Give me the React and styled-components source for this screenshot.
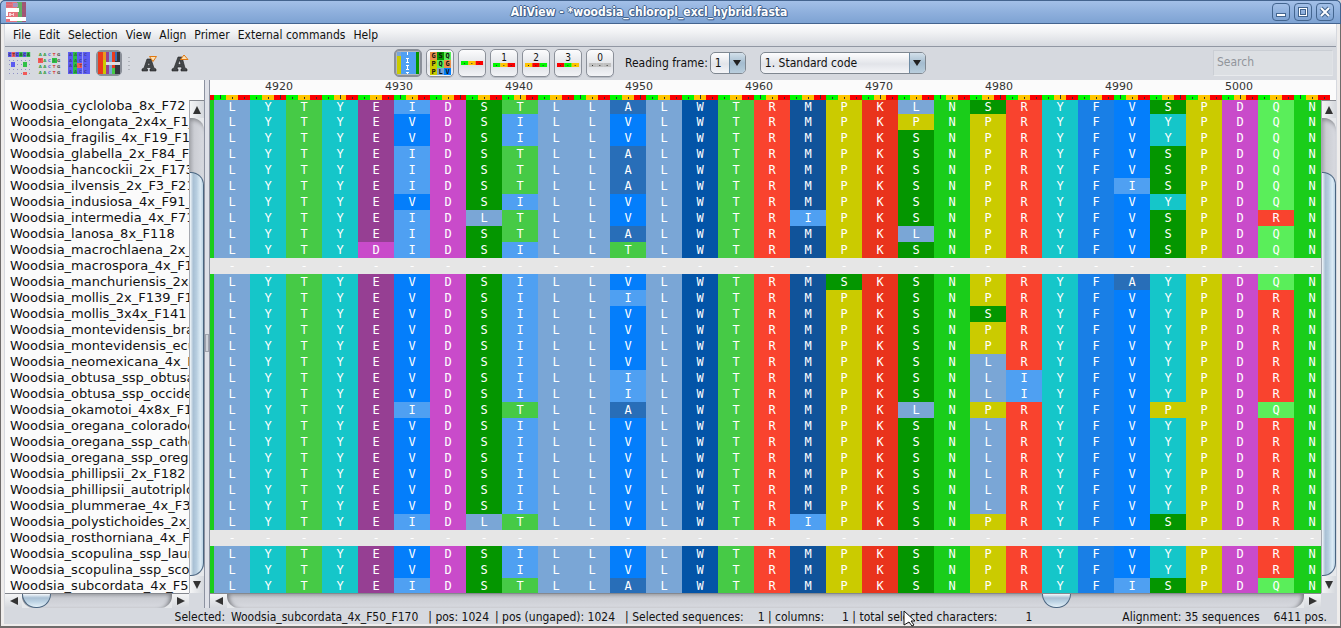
import React from "react";
import styled, { createGlobalStyle, css } from "styled-components";

const ui = `"DejaVu Sans Condensed", "DejaVu Sans", sans-serif`;

const Global = createGlobalStyle`
  * { box-sizing: border-box; }
  body { margin: 0; background: #d6d9df; }
  button, select, input { font: inherit; color: inherit; padding: 0; margin: 0; }
  svg { overflow: visible; }
`;

const SEQUENCES = [
  ["Woodsia_cycloloba_8x_F72", "LYTYEIDSTLLALWTRMPKLNSRYFVSPDQN"],
  ["Woodsia_elongata_2x4x_F1_F2", "LYTYEVDSILLVLWTRMPKPNPRYFVYPDQN"],
  ["Woodsia_fragilis_4x_F19_F18", "LYTYEVDSILLVLWTRMPKSNPRYFVYPDQN"],
  ["Woodsia_glabella_2x_F84_F12", "LYTYEIDSTLLALWTRMPKSNPRYFVSPDQN"],
  ["Woodsia_hancockii_2x_F173", "LYTYEIDSTLLALWTRMPKSNPRYFVSPDQN"],
  ["Woodsia_ilvensis_2x_F3_F21", "LYTYEIDSTLLALWTRMPKSNPRYFISPDQN"],
  ["Woodsia_indusiosa_4x_F91_F2", "LYTYEVDSILLVLWTRMPKSNPRYFVYPDQN"],
  ["Woodsia_intermedia_4x_F71", "LYTYEIDLTLLVLWTRIPKSNPRYFVSPDRN"],
  ["Woodsia_lanosa_8x_F118", "LYTYEIDSTLLALWTRMPKLNPRYFVSPDQN"],
  ["Woodsia_macrochlaena_2x_F8", "LYTYDIDSILLTLWTRMPKSNPRYFVSPDQN"],
  ["Woodsia_macrospora_4x_F12", "-------------------------------"],
  ["Woodsia_manchuriensis_2x4x", "LYTYEVDSILLVLWTRMSKSNPRYFAYPDQN"],
  ["Woodsia_mollis_2x_F139_F14", "LYTYEVDSILLILWTRMPKSNPRYFVYPDRN"],
  ["Woodsia_mollis_3x4x_F141", "LYTYEVDSILLVLWTRMPKSNSRYFVYPDRN"],
  ["Woodsia_montevidensis_brasil", "LYTYEVDSILLVLWTRMPKSNPRYFVYPDRN"],
  ["Woodsia_montevidensis_ecuador", "LYTYEVDSILLVLWTRMPKSNPRYFVYPDRN"],
  ["Woodsia_neomexicana_4x_F7", "LYTYEVDSILLVLWTRMPKSNLRYFVYPDRN"],
  ["Woodsia_obtusa_ssp_obtusa", "LYTYEVDSILLILWTRMPKSNLIYFVYPDRN"],
  ["Woodsia_obtusa_ssp_occidentalis", "LYTYEVDSILLILWTRMPKSNLIYFVYPDRN"],
  ["Woodsia_okamotoi_4x8x_F16", "LYTYEIDSTLLALWTRMPKLNPRYFVPPDQN"],
  ["Woodsia_oregana_coloradoensis", "LYTYEVDSILLVLWTRMPKSNLRYFVYPDRN"],
  ["Woodsia_oregana_ssp_cathcartiana", "LYTYEVDSILLVLWTRMPKSNLRYFVYPDRN"],
  ["Woodsia_oregana_ssp_oregana", "LYTYEVDSILLVLWTRMPKSNLRYFVYPDRN"],
  ["Woodsia_phillipsii_2x_F182", "LYTYEVDSILLVLWTRMPKSNLRYFVYPDRN"],
  ["Woodsia_phillipsii_autotriploid", "LYTYEVDSILLVLWTRMPKSNLRYFVYPDRN"],
  ["Woodsia_plummerae_4x_F31", "LYTYEVDSILLVLWTRMPKSNLRYFVYPDRN"],
  ["Woodsia_polystichoides_2x_F5", "LYTYEIDLTLLVLWTRIPKSNPRYFVSPDRN"],
  ["Woodsia_rosthorniana_4x_F59", "-------------------------------"],
  ["Woodsia_scopulina_ssp_laurentiana", "LYTYEVDSILLVLWTRMPKSNPRYFVYPDRN"],
  ["Woodsia_scopulina_ssp_scopulina", "LYTYEVDSILLVLWTRMPKSNPRYFVYPDRN"],
  ["Woodsia_subcordata_4x_F50_F170", "LYTYEIDSTLLALWTRMPKSNPRYFISPDQN"],
];

const RESIDUE = {
  L: "#7aa6d6", Y: "#15c6c9", T: "#46ca46", E: "#963f93", I: "#4fa0f2",
  V: "#047efb", D: "#c94bca", S: "#049600", A: "#286eb8", W: "#0354a7",
  R: "#f9432e", M: "#10539a", P: "#cbcb00", K: "#e9331c", N: "#1acd1a",
  F: "#197fe6", Q: "#5aee5a", "-": "#e6e6e6",
};

const CODON = ["#00f800", "#ffc400", "#fa0000"];

/* ---------- window frame ---------- */

const Window = styled.div`
  display: flex;
  flex-direction: column;
  height: 100vh;
  overflow: hidden;
  font: 12px/16px ${ui};
  color: #111;
  background: #3b5f8f;
  border-radius: 5px 5px 0 0;
`;

const TitleBar = styled.header`
  display: grid;
  grid-template-columns: auto 1fr auto;
  align-items: center;
  height: 24px;
  flex: none;
  padding: 0 6px 0 5px;
  border: 1px solid #44648f;
  border-radius: 5px 5px 0 0;
  background: linear-gradient(#a3c0e8, #8fb0dd 50%, #7ea3d3);
`;

const Title = styled.h1`
  margin: 0;
  font-size: 12px;
  line-height: 22px;
  font-weight: bold;
  text-align: center;
  white-space: nowrap;
  color: #fff;
  text-shadow: 1px 0 #44658f, -1px 0 #44658f, 0 1px #44658f, 0 -1px #44658f, 1px 1px #44658f;
`;

const WindowButtons = styled.div`
  display: flex;
  justify-content: flex-end;
  gap: 4px;
`;

const WindowButton = styled.button`
  display: grid;
  place-items: center;
  width: 18px;
  height: 18px;
  border: 1px solid #43658f;
  border-radius: 4px;
  background: linear-gradient(#a3c0e8, #7ea3d3);
`;

const Frame = styled.div`
  display: flex;
  flex-direction: column;
  flex: 1;
  min-height: 0;
  border: solid #6f6c6b;
  border-width: 0 1px 2px 1px;
  background: #d6d9df;
  box-shadow: inset 3px 0 #efedec, inset -3px 0 #efedec, inset 0 -2px #efedec;
  padding: 0 4px 3px 4px;
`;

const MenuBar = styled.nav`
  display: flex;
  gap: 8px;
  flex: none;
  height: 23px;
  padding: 2px 8px;
  border-bottom: 1px solid #9197a3;
  background: linear-gradient(#fdfdfe, #f2f3f5 35%, #d6d9df);
`;

const MenuItem = styled.button`
  border: 0;
  background: none;
  height: 18px;
  line-height: 18px;
  white-space: nowrap;
`;

/* ---------- toolbar ---------- */

const ToolBar = styled.div`
  display: flex;
  align-items: center;
  flex: none;
  height: 33px;
  padding: 0 3px 1px;
`;

const ToolGroup = styled.div`
  display: flex;
  align-items: center;
  gap: ${(p) => p.$gap}px;
  margin-right: ${(p) => p.$after}px;
`;

const Grow = styled.div`
  flex: ${(p) => p.$share ?? 1};
`;

const FlatTool = styled.button`
  display: grid;
  place-items: center;
  border: 0;
  background: none;
`;

const ToggleTool = styled.button`
  display: grid;
  place-items: center;
  align-content: center;
  width: ${(p) => p.$size}px;
  height: ${(p) => p.$size}px;
  border: 1px solid #8b9099;
  border-radius: 5px;
  background: ${(p) =>
    p.$pressed ? "#b4b8bf" : "linear-gradient(#fcfcfd, #e4e6ea 50%, #dfe1e6 60%, #f3f4f7)"};
  box-shadow: ${(p) => (p.$pressed ? "inset 0 0 0 1px #8a8f98" : "0 1px #b9bdc5")};
`;

const Combo = styled.span`
  display: flex;
  width: ${(p) => p.$width}px;
  height: 22px;
  margin-left: ${(p) => p.$before}px;
  border: 1px solid #7f8790;
  border-radius: 5px;
  overflow: hidden;
  background: linear-gradient(#fdfdfe, #e2e4e9 55%, #f4f5f8);
`;

const ComboSelect = styled.select`
  appearance: none;
  flex: 1;
  min-width: 0;
  border: 0;
  padding-left: 4px;
  background: none;
`;

const ComboArrow = styled.span`
  display: grid;
  place-items: center;
  width: 16px;
  pointer-events: none;
  border-left: 1px solid #6d8aa3;
  background: linear-gradient(#d3e0ea, #a4bccf 50%, #b9cedd);
`;

const SearchField = styled.input`
  width: 120px;
  height: 26px;
  padding: 0 3px 2px;
  border: 1px solid #caced4;
  border-right-color: #e0e2e6;
  border-bottom-color: #e8eaed;
  background: #dcdfe3;
  &::placeholder { color: #91959b; opacity: 1; }
`;

const HiddenLabel = styled.label`
  position: absolute;
  width: 1px;
  height: 1px;
  overflow: hidden;
  clip-path: inset(50%);
`;

/* ---------- split view ---------- */

const SplitView = styled.main`
  display: flex;
  flex: 1;
  min-height: 0;
`;

const Pane = styled.section`
  display: grid;
  grid-template-columns: minmax(0, 1fr) 15px;
  grid-template-rows: 20px minmax(0, 1fr) 15px;
  flex: ${(p) => p.$flex};
  min-width: 0;
  background: #d6d9df;
`;

const PaneHeader = styled.div`
  grid-column: 1 / -1;
  overflow: hidden;
  background: #fbfbfb;
`;

const Divider = styled.div`
  flex: none;
  width: 6px;
  display: grid;
  align-items: center;
  border-left: 1px solid #8c92a0;
  border-right: 1px solid #8c92a0;
  background: #dfe1e8;
`;

const Grip = styled.span`
  height: 18px;
  margin-bottom: 2px;
  border: 1px solid #a0a4ae;
  background: #cfd2da;
`;

const NameList = styled.ul`
  margin: 0;
  padding: 0 0 0 5px;
  list-style: none;
  overflow: hidden;
  background: #fbfbfb;
  font: 13px/16px "DejaVu Sans", sans-serif;
`;

const Name = styled.li`
  height: 16px;
  white-space: nowrap;
  &:first-child { height: 14px; line-height: 12px; }
`;

const RulerLabels = styled.div`
  display: flex;
  height: 15px;
  padding-left: 9px;
  font: 11px/13px "DejaVu Sans", sans-serif;
  color: #333;
`;

const RulerLabel = styled.span`
  flex: 0 0 120px;
  text-align: center;
`;

const RulerStrip = styled.div`
  display: flex;
  height: 5px;
`;

const RulerBase = styled.span`
  flex: 0 0 12px;
  display: flex;
  justify-content: center;
  align-items: ${(p) => (p.$major ? "flex-start" : "center")};
  background: ${(p) => p.$color};
  &::before {
    content: "";
    width: 1px;
    height: ${(p) => (p.$major ? 4 : 2)}px;
    background: #333;
  }
  &:first-child { flex-basis: 4px; }
  &:first-child::before { display: none; }
`;

const Cells = styled.div`
  overflow: hidden;
  background: #fff;
`;

const Alignment = styled.table`
  table-layout: fixed;
  width: 1120px;
  border-collapse: collapse;
  font: 12px/16px "DejaVu Sans Mono", monospace;
  color: #fff;
`;

const Site = styled.tr`
  height: 16px;
  &:first-child { height: 14px; line-height: 12px; }
`;

const Residue = styled.td`
  width: 36px;
  padding: 0;
  text-align: center;
  background: ${(p) => RESIDUE[p.$residue]};
  &:first-child { width: 4px; }
`;

/* ---------- scroll bars ---------- */

const vertical = css`
  flex-direction: column;
  border-left: 1px solid #a6a9b0;
`;

const ScrollBar = styled.div`
  display: flex;
  background: #e6e8eb;
  border-top: 1px solid #85888f;
  ${(p) => p.$vertical && vertical}
`;

const ScrollButton = styled.button`
  display: grid;
  place-items: center;
  flex: 0 0 17px;
  border: 0;
  background: linear-gradient(${(p) => (p.$vertical ? "90deg" : "180deg")}, #f4f5f6, #d5d8dd);
`;

const ScrollTrack = styled.div`
  display: flex;
  flex: 1;
  flex-direction: ${(p) => (p.$vertical ? "column" : "row")};
  border-radius: ${(p) => (p.$vertical ? "0 12px 12px 0" : "0 0 12px 12px")};
  background: linear-gradient(${(p) => (p.$vertical ? "90deg" : "180deg")}, #a9abb1, #cbcdd3 30%, #d8dae0);
  box-shadow: ${(p) => (p.$vertical ? "inset 0 5px 4px -3px #85878c" : "inset 5px 0 4px -3px #77797e, inset -5px 0 4px -3px #77797e")};
`;

const Thumb = styled.div`
  border: 1px solid #4a6580;
  ${(p) =>
    p.$vertical
      ? css`
          flex: ${p.$size};
          border-left: 0;
          border-radius: 0 13px 13px 0;
          background: linear-gradient(90deg, #f3f8fb, #a9c0d4 25%, #b7cee0 50%, #dcebf5 80%, #bcd3e4);
        `
      : css`
          flex: 0 0 29px;
          border-top: 0;
          border-radius: 0 0 14px 14px;
          background: linear-gradient(#f5f9fc, #a9c0d4 30%, #bdd3e4 60%, #e4f1f9);
        `}
`;

/* ---------- status bar ---------- */

const StatusBar = styled.footer`
  position: relative;
  display: flex;
  justify-content: flex-end;
  flex: none;
  height: 15px;
  margin: 0 9px 0 0;
  line-height: 18px;
  white-space: pre;
`;

const StatusItem = styled.span`
  margin-left: ${(p) => p.$before ?? 0}px;
`;

const Pointer = styled.svg`
  position: absolute;
  right: 411px;
  top: 2px;
`;

/* ---------- drawings ---------- */

const Triangle = ({ dir }) => {
  const d = {
    up: "M4 0L8 8H0Z",
    down: "M0 0H8L4 8Z",
    left: "M0 4L8 0V8Z",
    right: "M0 0L8 4L0 8Z",
  }[dir];
  return (
    <svg width="8" height="8" viewBox="0 0 8 8"><path d={d} fill="#333" /></svg>
  );
};

const LogoIcon = () => (
  <svg width="20" height="20" viewBox="0 0 20 20">
    <rect width="20" height="20" fill="#e8737d" />
    <rect x="11" width="5" height="20" fill="#63b066" />
    <rect x="16" width="4" height="20" fill="#9c5878" />
    <rect x="7" y="1" width="5" height="4" fill="#a793bf" />
    <path d="M0 6H13V10H2V14H0Z" fill="#fff" />
    <path d="M2 10H12V15H2Z" fill="#e3707a" />
    <path d="M3 11h2v1h2v-1h1v3h-1v-1h-2v1h-2z" fill="#f7cfd4" />
    <path d="M0 15H20V19H4V17H0Z" fill="#fff" />
    <path d="M0 1h6M0 4h6M16 3h4M16 9h4M16 13h4" stroke="#b9546a" opacity=".6" />
  </svg>
);

const letters = (rows, step, colors) =>
  rows.map((row, r) =>
    [...row].map((ch, c) => (
      <text key={`${r}-${c}`} x={c * step.x + step.x / 2} y={r * step.y + 4} textAnchor="middle"
        fontSize="4" fontFamily="DejaVu Sans, sans-serif" fontWeight="bold" fill={colors(ch, r, c)}>{ch}</text>
    ))
  );

const baseColor = (ch) => ({ A: "#2f9a3a", C: "#5a5ae0", T: "#d84040", G: "#444" }[ch]);

const DiffIcon = () => (
  <svg width="22" height="22" viewBox="0 0 22 22">
    {["#5a5af0", "#f05a5a", "#5a5af0", "#2fc048", "#5a5af0", "#2fc048"].map((f, i) => (
      <rect key={i} x={i * 3.7} width="3.700" height="5" fill={f} />
    ))}
    {letters(["CTCACA"], { x: 3.7, y: 6 }, () => "#222a")}
    {[8, 12, 17, 21].map((y) => (
      <path key={y} d={`M1 ${y}.5H22`} stroke="#8f90c8" strokeDasharray="1 3" />
    ))}
    <rect x="3" y="10" width="4" height="5" fill="#5a5af0" />
    <rect x="15" y="10" width="4" height="5" fill="#2fc048" />
    <rect x="15" y="20" width="4" height="3" fill="#f05a5a" />
  </svg>
);

const PlainIcon = () => (
  <svg width="22" height="22" viewBox="0 0 22 22">
    <rect y="6" width="5" height="5" fill="#f05a5a" />
    <rect x="14" y="6" width="5" height="5" fill="#2fc048" />
    {letters(["AACTG", "TACAG", "AACTG", "AACTG"], { x: 4.6, y: 6 }, baseColor)}
  </svg>
);

const ColumnIcon = () => (
  <svg width="22" height="22" viewBox="0 0 22 22">
    <rect width="22" height="22" fill="#5c5cf2" />
    <rect x="5" width="4" height="22" fill="#2fc048" />
    <rect x="9" y="11" width="5" height="5" fill="#f05a5a" />
    <path d="M14.500 0V22" stroke="#9a9cf0" />
    {letters(["AACC", "AACC", "AATC", "AACC"], { x: 5, y: 5.700 }, () => "#2228")}
  </svg>
);

const AminoIcon = () => (
  <svg width="22" height="22" viewBox="0 0 22 22">
    <rect width="22" height="22" fill="#ea3b1e" />
    <rect x="5" width="3" height="22" fill="#cbcb00" />
    <rect x="5" width="3" height="8" fill="#ea9a1e" />
    <rect x="8" width="3" height="22" fill="#963f93" />
    <rect x="11" width="3" height="22" fill="#7aa6d6" />
    <rect x="14" y="16" width="3" height="6" fill="#46ca46" />
    <rect x="17" width="5" height="22" fill="#33363f" />
    <rect x="17" width="2" height="9" fill="#3a69b0" />
    <rect x="8" y="10" width="14" height="3" fill="#dcdde2" />
  </svg>
);

const FontIcon = ({ grow }) => (
  <svg width="18" height="18" viewBox="0 0 18 18">
    <path d={grow ? "M1 17V15L3 14L7 3H11L14 14L16 15V17H10V15H11L10.500 13H6.500L6 15H7V17ZM7 10.500H10L8.500 6Z"
      : "M1 17V15L3 14L6 5H10L13 14L15 15V17H9V15H10L9.500 13.500H6L5.500 15H6.500V17ZM6.500 11.500H9L8 8Z"}
      fill="#43474a" stroke="#222" strokeWidth=".6" />
    {grow
      ? <path d="M9.500 5.500L13 1L17 5.500Z" fill="#fce0b4" stroke="#e07810" />
      : <path d="M8.500 2.500H15.500L12 7.500Z" fill="#fce0b4" stroke="#e07810" />}
  </svg>
);

const IsoIcon = () => (
  <svg width="22" height="22" viewBox="0 0 22 22">
    <rect width="22" height="22" fill="#4fa0f2" />
    <rect width="4" height="22" fill="#cbcb00" />
    <rect width="4" height="4" fill="#7aa6d6" />
    <rect x="19" width="3" height="22" fill="#049600" />
    <path d="M10.500 0v3M9 6.500h3M10.500 6v5M9 10.500h3M9 13.500h3M10.500 13v4M9 17.500h3M9 20.500h3M10.500 20v2" stroke="#fff" />
  </svg>
);

const PaletteIcon = () => {
  const rows = [
    ["G", "#e9904a"], ["S", "#049600"], ["Q", "#5aee5a"],
    ["P", "#cbcb00"], ["Q", "#5aee5a"], ["G", "#e9904a"],
    ["P", "#cbcb00"], ["L", "#7aa6d6"], ["V", "#047efb"],
  ];
  return (
    <svg width="21" height="23" viewBox="0 0 21 23">
      {rows.map(([ch, fill], i) => {
        const x = (i % 3) * 7;
        const y = Math.floor(i / 3) * 8;
        return (
          <g key={i}>
            <rect x={x} y={y} width="7" height={y > 15 ? 7 : 8} fill={fill} />
            <text x={x + 3.5} y={y + 6} textAnchor="middle" fontSize="7" fontWeight="bold"
              fontFamily="DejaVu Sans Mono, monospace" fill="#111">{ch}</text>
          </g>
        );
      })}
    </svg>
  );
};

const FrameIcon = ({ label, colors }) => (
  <svg width="22" height="22" viewBox="0 0 22 22">
    {label && (
      <text x="11" y="9" textAnchor="middle" fontSize="10"
        fontFamily="DejaVu Sans Condensed, sans-serif" fill="#111">{label}</text>
    )}
    {colors.map((c, i) => (
      <g key={i}>
        <rect x={i * 7.33} y={label ? 11 : 9} width="7.400" height="4" fill={c} />
        <rect x={i * 7.33 + 3} y={label ? 13 : 11} width="1" height="1" fill="#333" />
      </g>
    ))}
  </svg>
);

const Dropdown = ({ id, value, label, width, before }) => (
  <Combo $width={width} $before={before}>
    <ComboSelect id={id} defaultValue={value} aria-label={label}>
      <option>{value}</option>
    </ComboSelect>
    <ComboArrow>
      <svg width="8" height="6" viewBox="0 0 8 6"><path d="M0 0H8L4 6Z" fill="#222" /></svg>
    </ComboArrow>
  </Combo>
);

const VerticalScroll = () => (
  <ScrollBar $vertical>
    <ScrollButton $vertical aria-label="Scroll up"><Triangle dir="up" /></ScrollButton>
    <ScrollTrack $vertical>
      <Grow $share={54} />
      <Thumb $vertical $size={404} />
    </ScrollTrack>
    <ScrollButton $vertical aria-label="Scroll down"><Triangle dir="down" /></ScrollButton>
  </ScrollBar>
);

const HorizontalScroll = ({ before, after }) => (
  <ScrollBar>
    <ScrollButton aria-label="Scroll left"><Triangle dir="left" /></ScrollButton>
    <ScrollTrack>
      <Grow $share={before} />
      <Thumb />
      <Grow $share={after} />
    </ScrollTrack>
    <ScrollButton aria-label="Scroll right"><Triangle dir="right" /></ScrollButton>
  </ScrollBar>
);

const MENUS = ["File", "Edit", "Selection", "View", "Align", "Primer", "External commands", "Help"];
const TICKS = ["4920", "4930", "4940", "4950", "4960", "4970", "4980", "4990", "5000"];
const [G, O, R] = CODON;
const FRAMES = [
  { label: "", colors: [G, O, R], name: "Show codons" },
  { label: "1", colors: [G, O, R], name: "Codon position 1" },
  { label: "2", colors: [O, R, G], name: "Codon position 2" },
  { label: "3", colors: [R, G, O], name: "Codon position 3" },
  { label: "0", colors: ["#c0c0c0", "#c0c0c0", "#c0c0c0"], name: "Non-coding" },
];

export default function App() {
  return (
    <>
      <Global />
      <Window>
        <TitleBar>
          <LogoIcon />
          <Title>AliView - *woodsia_chloropl_excl_hybrid.fasta</Title>
          <WindowButtons>
            <WindowButton aria-label="Minimize">
              <svg width="12" height="12"><rect x="1.500" y="7.500" width="9" height="3" fill="#fff" stroke="#43658f" /></svg>
            </WindowButton>
            <WindowButton aria-label="Maximize">
              <svg width="12" height="12" fill="none">
                <rect x="2.500" y="2.500" width="7" height="7" stroke="#43658f" strokeWidth="3" />
                <rect x="2.500" y="2.500" width="7" height="7" stroke="#fff" />
              </svg>
            </WindowButton>
            <WindowButton aria-label="Close">
              <svg width="12" height="12" fill="none">
                <path d="M2 2L10 10M10 2L2 10" stroke="#43658f" strokeWidth="4" />
                <path d="M2 2L10 10M10 2L2 10" stroke="#fff" strokeWidth="2" />
              </svg>
            </WindowButton>
          </WindowButtons>
        </TitleBar>
        <Frame>
          <MenuBar>
            {MENUS.map((m) => <MenuItem key={m}>{m}</MenuItem>)}
          </MenuBar>
          <ToolBar>
            <ToolGroup $gap={8} $after={6}>
              <FlatTool aria-label="Show differences"><DiffIcon /></FlatTool>
              <FlatTool aria-label="Plain letters"><PlainIcon /></FlatTool>
              <FlatTool aria-label="Colour columns"><ColumnIcon /></FlatTool>
            </ToolGroup>
            <ToolGroup $gap={6} $after={11}>
              <ToggleTool $size={26} $pressed aria-label="Amino acid colours"><AminoIcon /></ToggleTool>
              <svg width="2" height="14"><path d="M1 1V14" stroke="#8d9199" strokeDasharray="1 3" /></svg>
            </ToolGroup>
            <ToolGroup $gap={12} $after={205}>
              <FlatTool aria-label="Smaller letters"><FontIcon /></FlatTool>
              <FlatTool aria-label="Larger letters"><FontIcon grow /></FlatTool>
            </ToolGroup>
            <ToolGroup $gap={4} $after={11}>
              <ToggleTool $size={28} $pressed aria-label="Translate"><IsoIcon /></ToggleTool>
              <ToggleTool $size={28} aria-label="Amino acid letters"><PaletteIcon /></ToggleTool>
              {FRAMES.map((f) => (
                <ToggleTool key={f.name} $size={28} aria-label={f.name}>
                  <FrameIcon label={f.label} colors={f.colors} />
                </ToggleTool>
              ))}
            </ToolGroup>
            <label htmlFor="reading-frame">Reading frame:</label>
            <Dropdown id="reading-frame" value="1" width={36} before={2} />
            <Dropdown id="genetic-code" label="Genetic code" value="1. Standard code" width={166} before={14} />
            <Grow />
            <HiddenLabel htmlFor="search">Search</HiddenLabel>
            <SearchField id="search" placeholder="Search" />
          </ToolBar>
          <SplitView>
            <Pane $flex="0 0 199px">
              <PaneHeader />
              <NameList>
                {SEQUENCES.map(([name]) => <Name key={name}>{name}</Name>)}
              </NameList>
              <VerticalScroll />
              <HorizontalScroll before={0} after={121} />
            </Pane>
            <Divider><Grip /></Divider>
            <Pane $flex="1">
              <PaneHeader>
                <RulerLabels>
                  {TICKS.map((t) => <RulerLabel key={t}>{t}</RulerLabel>)}
                </RulerLabels>
                <RulerStrip>
                  <RulerBase $color={CODON[2]} />
                  {Array.from({ length: 93 }, (_, i) => (
                    <RulerBase key={i} $color={CODON[i % 3]} $major={i % 5 === 0} />
                  ))}
                </RulerStrip>
              </PaneHeader>
              <Cells>
                <Alignment>
                  <tbody>
                    {SEQUENCES.map(([name, residues]) => (
                      <Site key={name}>
                        <Residue $residue={residues[30]} />
                        {[...residues].map((r, i) => <Residue key={i} $residue={r}>{r}</Residue>)}
                      </Site>
                    ))}
                  </tbody>
                </Alignment>
              </Cells>
              <VerticalScroll />
              <HorizontalScroll before={815} after={233} />
            </Pane>
          </SplitView>
          <StatusBar>
            <StatusItem>Selected:</StatusItem>
            <StatusItem $before={6}>Woodsia_subcordata_4x_F50_F170</StatusItem>
            <StatusItem $before={10}>| pos: 1024</StatusItem>
            <StatusItem $before={6}>| pos (ungaped): 1024</StatusItem>
            <StatusItem $before={10}>| Selected sequences:</StatusItem>
            <StatusItem $before={14}>1 | columns:</StatusItem>
            <StatusItem $before={18}>1 | total selected characters:</StatusItem>
            <StatusItem $before={28}>1</StatusItem>
            <StatusItem $before={90}>Alignment: 35 sequences</StatusItem>
            <StatusItem $before={14}>6411 pos.</StatusItem>
            <Pointer width="13" height="16" viewBox="0 0 13 16">
              <path d="M1 1L12 11H8L11 15L9 16L6 12L1 15Z" fill="#fff" stroke="#111" />
            </Pointer>
          </StatusBar>
        </Frame>
      </Window>
    </>
  );
}
